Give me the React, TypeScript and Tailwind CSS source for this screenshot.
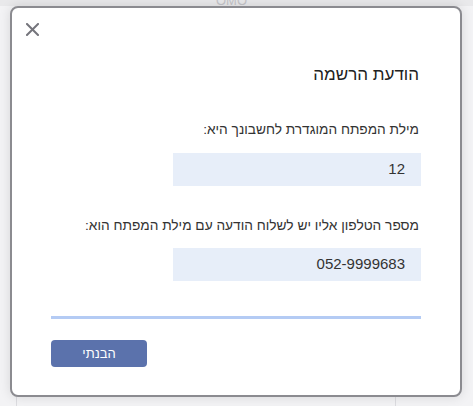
import React from "react";

export default function App() {
  return (
    <div
      className="relative w-[473px] h-[406px] overflow-hidden bg-[#f3f3f5]"
      style={{ fontFamily: '"Liberation Sans", Arial, sans-serif' }}
    >
      {/* faint page behind the dialog */}
      <div className="absolute inset-0">
        <div className="h-[6px] bg-[#e9e9eb] flex justify-center overflow-hidden">
          <span className="text-[13px] leading-[13px] -mt-[6px] text-[#c4c4c8] ml-[-10px]">OMO</span>
        </div>
        <div className="absolute left-[16px] top-[390px] w-px h-[16px] bg-[#dcdce0]" />
        <div className="absolute left-[395px] top-[390px] w-px h-[16px] bg-[#dcdce0]" />
      </div>

      <div className="absolute left-[10px] top-[6px] w-[452px] h-[391px] bg-white border-2 border-[#8b8b90] rounded-[8px] shadow-[0_0_12px_rgba(0,0,0,0.12)]">
        <button className="absolute left-[13px] top-[14px] w-[14px] h-[14px] flex items-center justify-center">
          <svg width="13" height="13" viewBox="0 0 13 13">
            <path d="M1 1 L12 12 M12 1 L1 12" stroke="#75757c" strokeWidth="2" strokeLinecap="square" />
          </svg>
        </button>

        <div dir="rtl" className="flex flex-col items-start px-[39px] pt-[55px] text-[#222]">
          <h2 className="text-[17px] leading-[24px] font-normal mr-[2px]">הודעת הרשמה</h2>

          <p className="mt-[33px] text-[13.7px] leading-[20px] text-[#333] mr-[2px]">
            מילת המפתח המוגדרת לחשבונך היא:
          </p>
          <div className="mt-[13px] w-[248px] h-[33px] bg-[#e7eef9] flex items-center pr-[16px] text-[15px] text-[#333]">
            12
          </div>

          <p className="mt-[30px] text-[13.7px] leading-[20px] text-[#333] mr-[2px]">
            מספר הטלפון אליו יש לשלוח הודעה עם מילת המפתח הוא:
          </p>
          <div className="mt-[12px] w-[248px] h-[33px] bg-[#e7eef9] flex items-center pr-[16px] text-[15px] text-[#333]">
            <span dir="ltr">052-9999683</span>
          </div>

          <div className="mt-[35px] w-[370px] h-[3px] bg-[#b4cbf4]" />

          <div className="w-full flex justify-end mt-[21px]">
            <button className="w-[96px] h-[27px] rounded-[4px] bg-[#5b72ac] text-white text-[13px] font-medium flex items-center justify-center">
              הבנתי
            </button>
          </div>
        </div>
      </div>
    </div>
  );
}
